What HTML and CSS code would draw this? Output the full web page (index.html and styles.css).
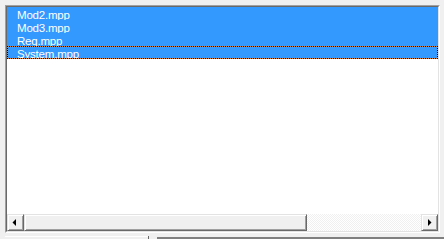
FILE: index.html
```html
<!DOCTYPE html>
<html lang="en">
<head>
    <meta charset="UTF-8">
    <title>Files</title>
    <link rel="stylesheet" href="styles.css">
</head>
<body>
    <div class="listbox">
        <div class="inner">
            <ul class="items">
                <li class="sel">Mod2.mpp</li>
                <li class="sel">Mod3.mpp</li>
                <li class="sel">Req.mpp</li>
                <li class="sel focus">System.mpp</li>
            </ul>
            <div class="hscroll">
                <div class="btn">
                    <svg width="15" height="15" viewBox="0 0 15 15"><polygon points="8,4 8,11 4.5,7.5" fill="#000"/></svg>
                </div>
                <div class="track">
                    <div class="thumb"></div>
                </div>
                <div class="btn">
                    <svg width="15" height="15" viewBox="0 0 15 15"><polygon points="6,4 6,11 9.5,7.5" fill="#000"/></svg>
                </div>
            </div>
        </div>
    </div>
    <div class="below">
        <div class="seg-a"></div>
        <div class="tick"></div>
        <div class="gap"></div>
        <div class="seg-b"></div>
    </div>
</body>
</html>
```

FILE: styles.css
```css
html, body {
    margin: 0;
    padding: 0;
}
body {
    width: 444px;
    height: 239px;
    overflow: hidden;
    background: #f0f0f0;
    font-family: "Liberation Sans", Arial, sans-serif;
    font-size: 11.5px;
}
.listbox {
    box-sizing: border-box;
    width: 435px;
    height: 228px;
    margin: 5px 0 0 5px;
    border: 1px solid;
    border-color: #a0a0a0 #fff #fff #a0a0a0;
}
.inner {
    box-sizing: border-box;
    height: 100%;
    border: 1px solid;
    border-color: #696969 #e3e3e3 #e3e3e3 #696969;
    background: #fff;
    display: flex;
    flex-direction: column;
}
.items {
    flex: 1;
    list-style: none;
    margin: 0;
    padding: 0;
}
.items li {
    position: relative;
    height: 13px;
    line-height: 13px;
    padding: 2px 0 0 10px;
    box-sizing: border-box;
    color: #000;
    letter-spacing: -0.2px;
}
.items li.sel {
    background: #3399ff;
    color: #fff;
}
.items li.focus::before,
.items li.focus::after {
    content: "";
    position: absolute;
    inset: 0;
}
.items li.focus::before {
    border: 1px solid #e08a2c;
}
.items li.focus::after {
    border: 1px dotted #000;
}
.hscroll {
    height: 17px;
    display: flex;
}
.btn,
.thumb {
    box-sizing: border-box;
    background: #f0f0f0;
    border: 1px solid;
    border-color: #e3e3e3 #696969 #696969 #e3e3e3;
    box-shadow: inset 1px 1px #fff, inset -1px -1px #a0a0a0;
}
.btn {
    width: 17px;
    height: 17px;
}
.btn svg {
    display: block;
}
.track {
    flex: 1;
    background: repeating-conic-gradient(#fff 0 25%, #f0f0f0 0 50%) 0 0 / 2px 2px;
}
.thumb {
    width: 283px;
    height: 17px;
}
.below {
    display: flex;
    height: 3px;
    margin: 3px 0 0 5px;
}
.seg-a {
    width: 143px;
    border-top: 1px solid #fff;
}
.tick {
    width: 1px;
    background: #696969;
}
.gap {
    width: 8px;
}
.seg-b {
    flex: 1;
    margin-top: 1px;
    background: #808080;
}
```
